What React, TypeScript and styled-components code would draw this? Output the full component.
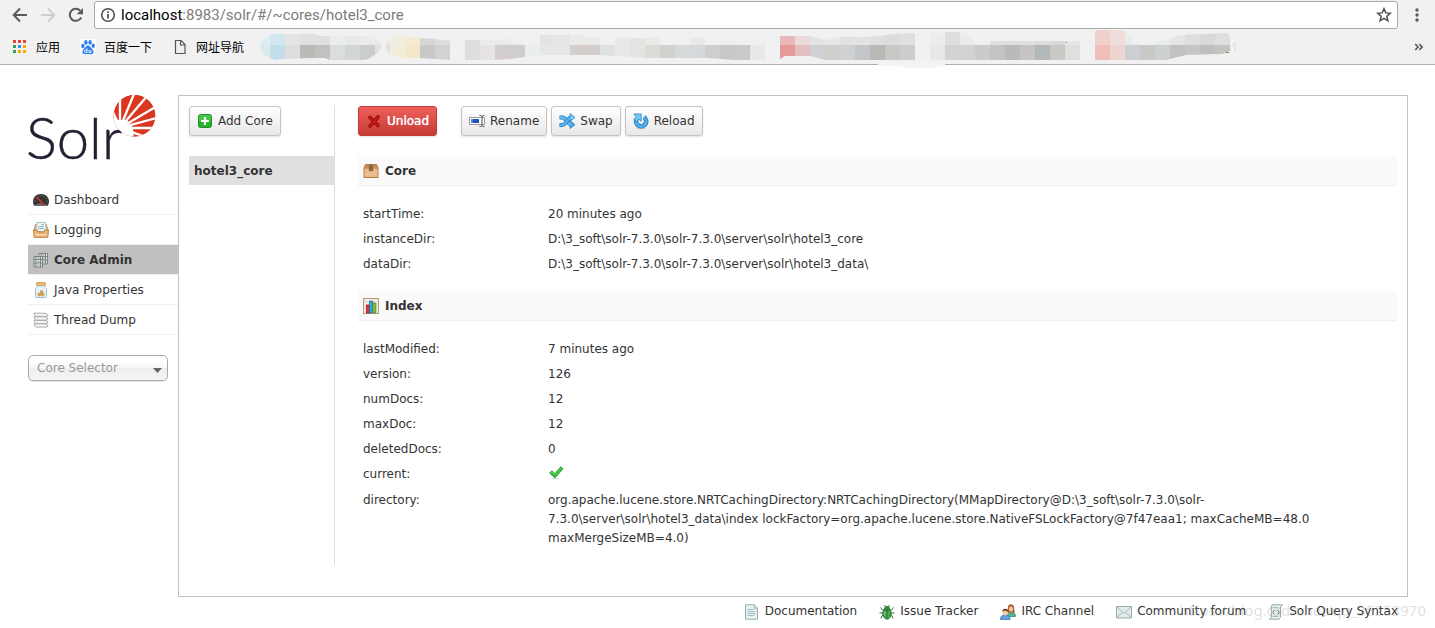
import React from "react";
import styled, { createGlobalStyle, css } from "styled-components";

const GlobalStyle = createGlobalStyle`
  *, *::before, *::after { box-sizing: border-box; }
  body {
    margin: 0;
    background: #fff;
    color: #333;
    font: 12px/19px "DejaVu Sans", Verdana, sans-serif;
  }
  a { color: inherit; text-decoration: none; }
  ul, dl, dd, h1, h2 { margin: 0; padding: 0; list-style: none; }
  svg { display: block; flex: none; }
`;

/* ---------- browser chrome ---------- */

const Chrome = styled.header`
  background: #f1f1f1;
  border-bottom: 1px solid #b0b0b0;
`;

const Toolbar = styled.div`
  display: flex;
  align-items: center;
  height: 30px;
  padding: 0 9px 0 12px;
`;

const ToolButton = styled.button<{ $width?: number }>`
  display: flex;
  align-items: center;
  justify-content: center;
  flex: none;
  width: ${(p) => p.$width ?? 28}px;
  height: 24px;
  padding: 0;
  border: 0;
  background: none;
  color: #5a5a5a;
  &:disabled { color: #cfcfcf; }
`;

const AddressBar = styled.div`
  display: flex;
  align-items: center;
  flex: 1;
  height: 28px;
  margin: 0 10px;
  padding: 0 4px 0 5px;
  background: #fff;
  border: 1px solid #a9a9a9;
  border-radius: 3px;
  font: 15px/20px Roboto, "Open Sans", sans-serif;
`;

const Host = styled.label`
  margin-left: 5px;
  color: #000;
`;

const UrlInput = styled.input`
  flex: 1;
  min-width: 0;
  padding: 0;
  border: 0;
  outline: 0;
  background: none;
  color: #7c7c7c;
  font: inherit;
`;

const Bookmarks = styled.nav`
  position: relative;
  display: flex;
  align-items: center;
  gap: 20px;
  height: 34px;
  padding: 0 11px 0 12px;
  color: #000;
  font: 12px/16px "Noto Sans CJK SC", sans-serif;
`;

const Bookmark = styled.a`
  display: flex;
  align-items: center;
  gap: 8px;
`;

const Overflow = styled.button`
  margin-left: auto;
  padding: 0;
  border: 0;
  background: none;
  color: #5a5a5a;
`;

const Mosaic = styled.svg`
  position: absolute;
  left: 255px;
  top: 0;
`;

/* ---------- page ---------- */

const Page = styled.div`
  display: flex;
  padding: 30px 27px 0 28px;
`;

const Sidebar = styled.aside`
  flex: none;
  width: 150px;
`;

const LogoLink = styled.a`
  display: block;
  margin-left: -4px;
`;

const MenuList = styled.ul`
  margin-top: 10px;
`;

const MenuItem = styled.li<{ $active?: boolean }>`
  border-bottom: 1px solid #f0f0f0;
  a {
    display: flex;
    align-items: center;
    gap: 5px;
    height: 29px;
    padding: 1px 0 0 5px;
    ${(p) => p.$active && css`background: #c0c0c0; font-weight: bold;`}
  }
`;

const SelectorWrap = styled.div`
  position: relative;
  width: 140px;
  margin-top: 20px;
  svg { position: absolute; right: 6px; top: 13px; pointer-events: none; }
`;

const Selector = styled.select`
  display: block;
  width: 100%;
  height: 26px;
  padding: 0 8px;
  appearance: none;
  border: 1px solid #aaa;
  border-radius: 5px;
  background: linear-gradient(#fff 20%, #f6f6f6 50%, #eee 52%, #f4f4f4 100%);
  box-shadow: 0 1px 1px rgba(0, 0, 0, 0.1);
  color: #999;
  font: inherit;
`;

const Panel = styled.main`
  display: flex;
  flex: 1;
  min-width: 0;
  padding: 9px 10px 31px;
  border: 1px solid #c0c0c0;
`;

const CoreNav = styled.nav`
  flex: none;
  width: 146px;
  padding-top: 1px;
  border-right: 1px solid #ddd;
`;

const CoreLink = styled.a`
  display: block;
  margin-top: 20px;
  padding: 6px 5px 4px;
  background: #e0e0e0;
  font-weight: bold;
`;

const Details = styled.div`
  flex: 1;
  min-width: 0;
  margin-left: 23px;
  padding-top: 1px;
`;

const Actions = styled.div`
  display: flex;
  gap: 4px;
  margin-bottom: 20px;
`;

const Button = styled.button<{ $danger?: boolean }>`
  display: flex;
  align-items: center;
  gap: 5px;
  height: 30px;
  padding: 0 7px;
  border: 1px solid #c4c4c4;
  border-radius: 3px;
  background: linear-gradient(#fff, #e8e8e8);
  box-shadow: 0 1px 2px rgba(0, 0, 0, 0.12);
  color: #333;
  font: inherit;
  ${(p) =>
    p.$danger &&
    css`
      margin-right: 20px;
      border-color: #c43c35;
      background: linear-gradient(#ee5f5b, #c43c35);
      color: #fff;
      text-shadow: 0 0 1px #fff;
    `}
`;

const SectionTitle = styled.h2`
  display: flex;
  align-items: center;
  gap: 6px;
  height: 30px;
  padding: 1px 0 0 5px;
  border-bottom: 1px solid #f0f0f0;
  background: #fafafa;
  font-size: 12px;
`;

const Facts = styled.dl`
  padding: 15px 5px;
`;

const Fact = styled.div`
  display: flex;
  padding: 4px 0 2px;
  dt { flex: none; width: 185px; }
  dd { flex: 1; min-width: 0; }
`;

const Flag = styled.span`
  display: block;
  height: 20px;
`;

const Footer = styled.footer`
  position: relative;
  padding: 5px 37px 4px;
  ul {
    display: flex;
    justify-content: flex-end;
    gap: 22px;
  }
  a {
    display: flex;
    align-items: center;
    gap: 5px;
  }
`;

const Watermark = styled.div`
  position: absolute;
  right: 9px;
  top: 4px;
  color: rgba(150, 150, 150, 0.3);
  font: 15px/19px "Noto Sans", sans-serif;
  pointer-events: none;
`;

/* ---------- icons ---------- */

type IconProps = { children: React.ReactNode; size?: number };
const Icon = ({ children, size = 16 }: IconProps) => (
  <svg width={size} height={size} viewBox="0 0 16 16" fill="none" aria-hidden="true">
    {children}
  </svg>
);

const BackIcon = () => (
  <Icon><path d="M15 8H2M8 1.5 1.7 8 8 14.500" stroke="currentColor" strokeWidth="2" /></Icon>
);
const ForwardIcon = () => (
  <Icon><path d="M1 8h13M8 1.500 14.300 8 8 14.500" stroke="currentColor" strokeWidth="2" /></Icon>
);
const RefreshIcon = () => (
  <Icon>
    <path d="M13.200 10.500A6 6 0 1 1 12.300 3.800" stroke="currentColor" strokeWidth="2" />
    <path d="M15 1v6.300H8.700z" fill="currentColor" />
  </Icon>
);
const InfoIcon = () => (
  <Icon>
    <circle cx="8" cy="8" r="6.300" stroke="#4a4a4a" strokeWidth="1.500" />
    <path d="M8 7v4.600M8 4.200v1.700" stroke="#4a4a4a" strokeWidth="1.700" />
  </Icon>
);
const StarIcon = () => (
  <Icon>
    <path d="m8 1.700 1.800 4.200 4.500.4-3.400 3 1 4.500L8 11.400l-3.900 2.400 1-4.500-3.400-3 4.500-.4z" stroke="#4f4f4f" strokeWidth="1.500" />
  </Icon>
);
const DotsIcon = () => (
  <Icon>
    <g fill="#5a5a5a"><circle cx="8" cy="3" r="1.700" /><circle cx="8" cy="8" r="1.700" /><circle cx="8" cy="13" r="1.700" /></g>
  </Icon>
);
const ChevronsIcon = () => (
  <Icon size={10}><path d="M2 3.500l4.500 4.500L2 12.500M8.500 3.500L13 8l-4.500 4.500" stroke="currentColor" strokeWidth="2.600" /></Icon>
);
const AppsIcon = () => (
  <Icon>
    {["#ea4335", "#ea4335", "#ea4335", "#34a05a", "#4285f4", "#f9ab00", "#34a05a", "#f9ab00", "#f9ab00"].map((c, i) => (
      <rect key={i} x={1 + (i % 3) * 5} y={1 + Math.floor(i / 3) * 5} width="3" height="3" fill={c} />
    ))}
  </Icon>
);
const PawIcon = () => (
  <Icon>
    <rect width="16" height="16" fill="#fff" />
    <g fill="#2f80ee">
      <ellipse cx="2.900" cy="7" rx="1.700" ry="2.300" />
      <ellipse cx="5.900" cy="3.400" rx="1.700" ry="2.400" />
      <ellipse cx="10.100" cy="3.400" rx="1.700" ry="2.400" />
      <ellipse cx="13.200" cy="6.700" rx="1.700" ry="2.300" />
      <path d="M8 6.600c2 0 2.600 2 4 3.200 2.300 2 2 5.500-.8 5.500-1.200 0-2-.3-3.200-.3s-2 .3-3.200.3c-2.800 0-3.300-3.500-.8-5.500C5.400 8.600 6 6.600 8 6.600z" />
    </g>
    <path d="M7 9.500v4H5.600a1.200 1.200 0 0 1 0-2.500H7M9 11v2.500h2V11" stroke="#fff" strokeWidth=".9" />
  </Icon>
);
const FileIcon = () => (
  <Icon><path d="M3.500 1.500h5.500l4 4v9H3.500zM8.500 1.500V6H13" stroke="#555" strokeWidth="1.200" /></Icon>
);

const GaugeIcon = () => (
  <Icon>
    <path d="M0 9.500C0 5 3.500 2 8 2s8 3 8 7.500c0 1.700-.6 3-1.300 4.200H1.300C.5 12.500 0 11.200 0 9.500z" fill="#333" />
    <path d="M1.800 9.500C1.800 6 4.500 3.800 8 3.800s6.200 2.200 6.200 5.700" stroke="#8d8d8d" strokeWidth="1" strokeDasharray="1 2" />
    <path d="M2 12.700c4-1.800 8-1.800 12 0v1H2z" fill="#696969" />
    <path d="M4 5.500l6.500 6.800" stroke="#e33" strokeWidth="1.400" />
    <circle cx="10.300" cy="12" r="1.200" fill="#b22" />
  </Icon>
);
const TrayIcon = () => (
  <Icon>
    <path d="M2.500 2.500h11l1.800 6.500H.7z" fill="#e6c9a0" stroke="#b98550" strokeWidth=".8" />
    <path d="M4 .6h8.500l.7 9H3z" fill="#f4fafa" stroke="#8fb0b5" strokeWidth=".8" />
    <path d="M8 2.700h3M5 4.700h6M5 6.700h6" stroke="#7da6ad" strokeWidth=".9" />
    <path d="M.6 8h3.600l1.200 2h5.200l1.200-2h3.600l-.5 7.300H1.100z" fill="#edb778" stroke="#b67536" strokeWidth=".9" />
    <path d="M2 12.800h12" stroke="#f8d6aa" strokeWidth="1.400" />
  </Icon>
);
const ServersIcon = () => (
  <Icon>
    {[[6, 0.5], [1, 3.500]].map(([x, y], i) => (
      <g key={i} stroke="#747b78" strokeWidth=".9">
        <path d={`M${x} ${y + 1}h8.500v10.500H${x}z`} fill="#dce2df" />
        <path d={`M${x} ${y + 4}h8.500M${x} ${y + 7.500}h8.500M${x + 2} ${y + 1}v10.500M${x + 6.500} ${y + 1}v10.500`} />
        <path d={`M${x + 3.500} ${y + 2.500}h2M${x + 3.500} ${y + 6}h2M${x + 3.500} ${y + 9.500}h2`} stroke="#73a78a" strokeWidth="1.200" />
      </g>
    ))}
  </Icon>
);
const JarIcon = () => (
  <Icon>
    <rect x="3.500" y=".6" width="9" height="3" rx=".8" fill="#f0bc68" stroke="#cc8b38" strokeWidth=".8" />
    <path d="M4.500 3.800h7c0 1.500 2 1.800 2 3.500v7c0 .8-.5 1.200-1.200 1.200H3.700c-.7 0-1.200-.4-1.200-1.200v-7c0-1.700 2-2 2-3.500z" fill="#e8f4fb" stroke="#92b5ca" strokeWidth=".9" />
    <g fill="#e3b055" stroke="#b27d2c" strokeWidth=".6"><circle cx="6.200" cy="12.500" r="1.500" /><circle cx="9.700" cy="12.500" r="1.500" /><circle cx="8.600" cy="10" r="1.400" /></g>
  </Icon>
);
const StackIcon = () => (
  <Icon>
    {[11, 7.500, 4, 0.500].map((y) => (
      <path key={y} d={`M1 ${y + 0.700}h11l3 1.700-1 1.700H3.500L1.500 ${y + 2.500}z`} fill="#f3f3f3" stroke="#9b9b9b" strokeWidth=".8" />
    ))}
  </Icon>
);
const AddIcon = () => (
  <Icon>
    <rect x="1.500" y="1.500" width="13" height="13" rx="2" fill="#24b52b" stroke="#16861c" strokeWidth=".9" />
    <rect x="2" y="2" width="12" height="6" rx="1" fill="#5bd55b" opacity=".6" />
    <path d="M8 4v8M4 8h8" stroke="#fff" strokeWidth="2.200" />
  </Icon>
);
const CrossIcon = () => (
  <Icon>
    <path d="M4 4.500l8 8M12 4l-8 9" stroke="#8d0c0c" strokeWidth="3.600" strokeLinecap="round" />
    <path d="M4 4.500l8 8M12 4l-8 9" stroke="#c91818" strokeWidth="1.900" strokeLinecap="round" />
  </Icon>
);
const RenameIcon = () => (
  <Icon>
    <path d="M.5 4.500h15v7H.5z" fill="#fff" stroke="#999" />
    <path d="M2 6h8v4H2z" fill="#2451b8" />
    <path d="M2 6h2v4H2z" fill="#5b82d4" />
    <path d="M10.500 2.500h1.300l1.200 1 1.200-1h1.300M10.500 13.500h1.300l1.200-1 1.200 1h1.300M13 3.500v9" stroke="#555" />
  </Icon>
);
const SwapIcon = () => (
  <Icon>
    <path d="M.5 4.500h3C7 4.500 8.500 11.500 12 11.500" stroke="#2179bd" strokeWidth="3.800" />
    <path d="M11 7.500l5 4.200-5 3.800z" fill="#49a9e8" stroke="#2179bd" strokeWidth=".7" />
    <path d="M.5 4.500h3C7 4.500 8.500 11.500 12 11.500" stroke="#63bdf3" strokeWidth="2.400" />
    <path d="M.5 12h3C7 12 8.500 4.500 12 4.500" stroke="#2179bd" strokeWidth="3.800" />
    <path d="M11 .5l5 4-5 4z" fill="#7fcdf8" stroke="#2179bd" strokeWidth=".7" />
    <path d="M.5 12h3C7 12 8.500 4.500 12 4.500" stroke="#58b4ee" strokeWidth="2.400" />
  </Icon>
);
const ReloadIcon = () => (
  <Icon>
    <ellipse cx="8" cy="15.200" rx="5" ry=".7" fill="#ccc" />
    <path d="M11 4.200a5 5 0 1 1-7.200 1.600" stroke="#2076b8" strokeWidth="4.600" />
    <path d="M11 4.200a5 5 0 1 1-7.200 1.600" stroke="#4fadea" strokeWidth="3.200" />
    <path d="M.8 1h7.400v7.200L6 6.200 3.300 8.700.8 6.500l2.500-2.800z" fill="#78c8f5" stroke="#2584c6" strokeWidth=".8" />
  </Icon>
);
const BoxIcon = () => (
  <Icon>
    <path d="M2.500 1.500h11L15 5v9.500H1V5z" fill="#d9a066" stroke="#a96f39" strokeWidth=".9" />
    <path d="M2.800 2h10.400l1.200 3.500H1.600z" fill="#c98d54" />
    <path d="M1.600 6h12.800v7.800H1.600z" fill="#eabf8c" />
    <path d="M6.200 1.500h3.600l.4 7-1.400-.8-.8 1-.8-1-1.400.8z" fill="#8c6546" />
  </Icon>
);
const ChartIcon = () => (
  <Icon>
    <rect x=".5" y=".5" width="15" height="15" fill="#f3ece2" stroke="#b39c86" />
    <path d="M1 4h14M1 7h14M1 10h14" stroke="#ddd0bf" strokeWidth=".7" />
    <path d="M3.500 7h3v8h-3z" fill="#e93446" stroke="#a80b20" strokeWidth=".8" />
    <path d="M6.500 3h3v12h-3z" fill="#39a9dd" stroke="#14719f" strokeWidth=".8" />
    <path d="M9.800 5h3v10h-3z" fill="#7cc741" stroke="#478b1c" strokeWidth=".8" />
  </Icon>
);
const TickIcon = () => (
  <Icon>
    <ellipse cx="7" cy="13.500" rx="4.500" ry=".8" fill="#ddd" />
    <path d="M1.500 8l2.500-2.200 2.900 2.700L12.700 1.800l2.300 2L7 13z" fill="#2fbd3a" stroke="#179022" strokeWidth=".7" />
    <path d="M2.700 8L4 7l3 2.700 5.700-6.500" stroke="#76dc76" strokeWidth=".8" />
  </Icon>
);
const DocIcon = () => (
  <Icon>
    <path d="M1.500.8h8.800l3.200 3.400v11h-12z" fill="#e8f2f2" stroke="#8fa3a3" strokeWidth=".9" />
    <path d="M10.300.8v3.400h3.200" fill="#cfdfdf" stroke="#8fa3a3" strokeWidth=".8" />
    <path d="M3.500 5.500h6M3.500 7.500h8M3.500 9.500h8M3.500 11.500h7" stroke="#9bbabb" strokeWidth=".9" />
  </Icon>
);
const BugIcon = () => (
  <Icon>
    <path d="M1.500 3.500l2 2.500 2 .5M14.500 3.500l-2 2.500-2 .5M.5 9h4M15.500 9h-4M2 14.500l1-2.800L5 11M14 14.500l-1-2.800L11 11M5.500 1L7 3M10.500 1L9 3" stroke="#3d6b44" strokeWidth="1" />
    <ellipse cx="8" cy="9.500" rx="4.200" ry="5.600" fill="#46ab50" stroke="#226b2d" strokeWidth=".9" />
    <path d="M4.800 5c.3-2 1.500-3 3.200-3s2.900 1 3.200 3z" fill="#2f8a3b" />
    <path d="M8 5.500V15M4.500 6h7" stroke="#1d6228" strokeWidth=".9" />
    <path d="M6 7.500v4" stroke="#8fd694" />
  </Icon>
);
const PeopleIcon = () => (
  <Icon>
    <path d="M6.800 12.500c0-3 1.500-4.300 4.200-4.300s4.600 1.300 4.600 4.300z" fill="#56b48a" stroke="#2d8560" strokeWidth=".7" />
    <path d="M7.800 4c0-5 6.400-5 6.400 0 0 2 .5 3.500.5 4.500H7.500c0-1 .3-2.500.3-4.500z" fill="#a7592c" />
    <ellipse cx="11" cy="5" rx="2.100" ry="2.800" fill="#f1c49c" />
    <path d="M.5 15.500c0-3.200 1.500-4.700 4.700-4.700s4.800 1.500 4.800 4.700z" fill="#5fa3e6" stroke="#2f6cae" strokeWidth=".7" />
    <ellipse cx="5.200" cy="8.300" rx="2.700" ry="3.200" fill="#f3c9a2" />
    <path d="M2.300 8c-.4-4.500 6.300-4.500 5.800 0C7 7 6 6.500 5 6.500S3 7 2.300 8z" fill="#563522" />
  </Icon>
);
const MailIcon = () => (
  <Icon>
    <path d="M.5 2.500h15v11.500H.5z" fill="#e2ecec" stroke="#8da1a1" strokeWidth=".9" />
    <path d="M1 3l7 6.500L15 3M1 13.500L6 9M15 13.500L10 9" stroke="#9cb0b0" strokeWidth=".9" />
  </Icon>
);
const ScriptIcon = () => (
  <Icon>
    <path d="M4 .8h10.500l-2 2.200v10.500l-1.700 1.700H1.500l1.800-2V3z" fill="#e9f0ef" stroke="#8b9f9e" strokeWidth=".9" />
    <path d="M4.500 3.500h6M4.500 12.500h6" stroke="#a9bcbb" />
    <path d="M6.500 6L4.800 8.200l1.700 2.200M9.500 6l1.700 2.200-1.700 2.200" stroke="#657d7c" />
  </Icon>
);

/* Sun rays fan out of one point near the lower left edge of the disc. */
const RAYS: [number, number][] = [
  [283, 60], [312, 18], [358, 14], [400, 22], [430, 56], [436, 92], [430, 126], [404, 158],
];

const SolrLogo = () => (
  <svg width="134" height="80" viewBox="-4 0 134 80" role="img" aria-label="Solr">
    <defs><clipPath id="disc"><circle cx="106.500" cy="20.700" r="21" /></clipPath></defs>
    <text x="-2" y="64" fill="#231f32" stroke="#231f32" strokeWidth=".5" fontFamily="Lato, sans-serif" fontWeight="300" fontSize="58">Solr</text>
    <g clipPath="url(#disc)">
      <g transform="translate(-12 -9) scale(.3333)">
        <circle cx="355" cy="90" r="64" fill="#d9371f" />
        <path d="M280 88L306 102L332 102L346 118L354 139L350 170L280 170z" fill="#fff" />
        {RAYS.map(([x, y]) => (
          <path key={x + y} d={`M312 126L${x} ${y}`} stroke="#fff" strokeWidth="7" />
        ))}
      </g>
    </g>
  </svg>
);

/* Censored bookmark labels: 15px blocks, [x, top, bottom]; cut to a rough outline. */
const BLOCKS: [number, string, string][] = [
  [255, "#e0edf0", "#d9e9ec"], [270, "#d2e6ef", "#c3deeb"], [285, "#e4e4e4", "#dedede"], [300, "#e0e0de", "#bcbab7"],
  [315, "#dedfde", "#c0c2c1"], [330, "#ebeded", "#dbdedd"], [345, "#e8e9ea", "#d2d6d9"], [360, "#ebebeb", "#cacdcc"],
  [375, "#e9e9e9", "#e0e0e0"], [390, "#f0ede1", "#f3eddc"], [405, "#f3ead0", "#f3e8ca"], [420, "#d6d6d6", "#c8c8c8"],
  [435, "#dcdcdc", "#d3d1d3"], [465, "#dedede", "#dedede"], [480, "#ecebe9", "#e6e4e2"], [495, "#eaebea", "#d3cecd"],
  [510, "#e7e7e7", "#cfcecc"], [525, "#f1f1f1", "#ebeeee"], [540, "#e4e4e4", "#e6e6e6"], [555, "#e6e6e6", "#e6e6e6"],
  [570, "#ebebea", "#d3cdcb"], [585, "#e9e9e9", "#d3cdcb"], [600, "#f1f1f1", "#dfe2e1"], [615, "#e8e8e8", "#e8e8e8"],
  [630, "#e3e3e3", "#e3e3e3"], [645, "#e9e9e7", "#dbdcd6"], [660, "#eeeeee", "#d2d1cf"], [675, "#f1f1f1", "#d6dad9"],
  [690, "#e9e9e9", "#d6d8db"], [705, "#f1f1f1", "#cecece"], [720, "#eceded", "#c8c8c8"], [735, "#efefef", "#cacaca"],
  [750, "#efefef", "#e8e8e8"], [780, "#e9b8b8", "#e59999"], [795, "#ecd9d9", "#e3bfc1"], [810, "#e3e3e3", "#d1d1d3"],
  [825, "#e6e6e4", "#cfd0cb"], [840, "#e1e1e1", "#d0d2d1"], [855, "#e3e3e3", "#c4c7c9"], [870, "#dedede", "#b9b9b6"],
  [885, "#dcdcdc", "#c8c8c6"], [900, "#dfdfe0", "#cbcdce"], [930, "#ececec", "#e8e8e8"], [945, "#dedede", "#d3d3d3"],
  [960, "#ebebeb", "#d2d2d4"], [975, "#eeeeee", "#cbcbca"], [990, "#dfdfdf", "#c6c3c3"], [1005, "#dfdfdf", "#bcb9bd"],
  [1020, "#dfdfdf", "#c6c5c4"], [1035, "#dddddd", "#b3b9b9"], [1050, "#d8d8d8", "#c8c8c4"], [1065, "#e6e6e6", "#dde0df"],
  [1095, "#f0d0cb", "#f0beb8"], [1110, "#f0dddb", "#ecd5d0"], [1125, "#ebebeb", "#cccfd1"], [1140, "#f1f1f1", "#c9c9c5"],
  [1155, "#e9ecee", "#cdd0d0"], [1170, "#e5e5e4", "#c2c2c4"], [1185, "#dedede", "#c6c6c5"], [1200, "#d9d9d9", "#bfbfbd"],
  [1215, "#dedede", "#c5c4c1"],
];

const OUTLINE = [
  "M260 46Q262 34 276 34L314 34 322 36H368Q381 38 381 47Q380 53 373 56Q368 60 362 60H330L325 58H312L285 59 276 60Q260 56 260 46z",
  "M386 46Q388 35 400 35L418 38 438 39 439 40H450V60L420 58H404Q386 56 386 46z",
  "M465 40H495L510 38V42L525 45H540V56L525 57 510 59 495 60H465z",
  "M540 35H585V38H600V45H615V37H630V38H660V45H690V38H705V45H720V40H765V60H735L708 58H645L600 55H540z",
  "M780 36H810L826 40 840 37H870L895 34 915 33V60H826L810 56H785L780 59z",
  "M930 33H945V32H960Q972 34 974 43L990 41H1080V60H930z",
  "M1095 31Q1105 28 1124 31Q1132 34 1132 43H1155L1180 35 1226 33Q1230 34 1230 38V50Q1226 55 1215 54L1186 55 1166 60H1095z",
].join("");

const CensoredBookmarks = () => (
  <Mosaic width="1000" height="38" viewBox="255 30 1000 38" fill="none" aria-hidden="true">
    <defs><clipPath id="smear"><path d={OUTLINE} /></clipPath></defs>
    <g clipPath="url(#smear)" shapeRendering="crispEdges">
      {BLOCKS.map(([x, top, bottom]) => (
        <g key={x}>
          <rect x={x} y="30" width="15" height="15" fill={top} />
          <rect x={x} y="45" width="15" height="15" fill={bottom} />
        </g>
      ))}
    </g>
    <path d="M878 62H945V65L930 68H908L898 66H878z" fill="#f4f4f4" />
    <path d="M1066 42.500h1" stroke="#3b93b8" />
    <path d="M1226 52.500h3M1229 50h1" stroke="#9a8473" />
    <path d="M1232 46l3-3v9" stroke="#dedbd8" />
  </Mosaic>
);

/* ---------- data ---------- */

const MENU = [
  { label: "Dashboard", icon: <GaugeIcon /> },
  { label: "Logging", icon: <TrayIcon /> },
  { label: "Core Admin", icon: <ServersIcon />, active: true },
  { label: "Java Properties", icon: <JarIcon /> },
  { label: "Thread Dump", icon: <StackIcon /> },
];

const CORE_FACTS: [string, React.ReactNode][] = [
  ["startTime:", "20 minutes ago"],
  ["instanceDir:", "D:\\3_soft\\solr-7.3.0\\solr-7.3.0\\server\\solr\\hotel3_core"],
  ["dataDir:", "D:\\3_soft\\solr-7.3.0\\solr-7.3.0\\server\\solr\\hotel3_data\\"],
];

const INDEX_FACTS: [string, React.ReactNode][] = [
  ["lastModified:", "7 minutes ago"],
  ["version:", "126"],
  ["numDocs:", "12"],
  ["maxDoc:", "12"],
  ["deletedDocs:", "0"],
  ["current:", <Flag><TickIcon /></Flag>],
  [
    "directory:",
    <>
      {"org.apache.lucene.store.NRTCachingDirectory:NRTCachingDirectory(MMapDirectory@D:\\3_soft\\solr-7.3.0\\solr-"}
      <wbr />
      {"7.3.0\\server\\solr\\hotel3_data\\index lockFactory=org.apache.lucene.store.NativeFSLockFactory@7f47eaa1; maxCacheMB=48.0 maxMergeSizeMB=4.0)"}
    </>,
  ],
];

const LINKS = [
  { label: "Documentation", icon: <DocIcon /> },
  { label: "Issue Tracker", icon: <BugIcon /> },
  { label: "IRC Channel", icon: <PeopleIcon /> },
  { label: "Community forum", icon: <MailIcon /> },
  { label: "Solr Query Syntax", icon: <ScriptIcon /> },
];

const FactList = ({ facts }: { facts: [string, React.ReactNode][] }) => (
  <Facts>
    {facts.map(([name, value]) => (
      <Fact key={name}><dt>{name}</dt><dd>{value}</dd></Fact>
    ))}
  </Facts>
);

export default function App() {
  return (
    <>
      <GlobalStyle />
      <Chrome>
        <Toolbar>
          <ToolButton $width={16} aria-label="Back"><BackIcon /></ToolButton>
          <ToolButton $width={40} aria-label="Forward" disabled><ForwardIcon /></ToolButton>
          <ToolButton $width={16} aria-label="Reload page"><RefreshIcon /></ToolButton>
          <AddressBar>
            <InfoIcon />
            <Host htmlFor="url">localhost</Host>
            <UrlInput id="url" defaultValue=":8983/solr/#/~cores/hotel3_core" />
            <ToolButton $width={18} aria-label="Bookmark this page"><StarIcon /></ToolButton>
          </AddressBar>
          <ToolButton $width={18} aria-label="Browser menu"><DotsIcon /></ToolButton>
        </Toolbar>
        <Bookmarks>
          <Bookmark href="#apps"><AppsIcon />应用</Bookmark>
          <Bookmark href="#baidu"><PawIcon />百度一下</Bookmark>
          <Bookmark href="#sites"><FileIcon />网址导航</Bookmark>
          <CensoredBookmarks />
          <Overflow aria-label="More bookmarks"><ChevronsIcon /></Overflow>
        </Bookmarks>
      </Chrome>

      <Page>
        <Sidebar>
          <LogoLink href="#home"><SolrLogo /></LogoLink>
          <MenuList>
            {MENU.map((m) => (
              <MenuItem key={m.label} $active={m.active}>
                <a href="#menu">{m.icon}{m.label}</a>
              </MenuItem>
            ))}
          </MenuList>
          <SelectorWrap>
            <Selector aria-label="Core Selector"><option>Core Selector</option></Selector>
            <svg width="9" height="5" viewBox="0 0 9 5"><path d="M0 0h9L4.500 5z" fill="#666" /></svg>
          </SelectorWrap>
        </Sidebar>

        <Panel>
          <CoreNav>
            <Button><AddIcon />Add Core</Button>
            <CoreLink href="#hotel3_core">hotel3_core</CoreLink>
          </CoreNav>
          <Details>
            <Actions>
              <Button $danger><CrossIcon />Unload</Button>
              <Button><RenameIcon />Rename</Button>
              <Button><SwapIcon />Swap</Button>
              <Button><ReloadIcon />Reload</Button>
            </Actions>
            <SectionTitle><BoxIcon />Core</SectionTitle>
            <FactList facts={CORE_FACTS} />
            <SectionTitle><ChartIcon />Index</SectionTitle>
            <FactList facts={INDEX_FACTS} />
          </Details>
        </Panel>
      </Page>

      <Footer>
        <ul>
          {LINKS.map((l) => (
            <li key={l.label}><a href="#link">{l.icon}{l.label}</a></li>
          ))}
        </ul>
        <Watermark>https://blog.csdn.net/qq_35253970</Watermark>
      </Footer>
    </>
  );
}
